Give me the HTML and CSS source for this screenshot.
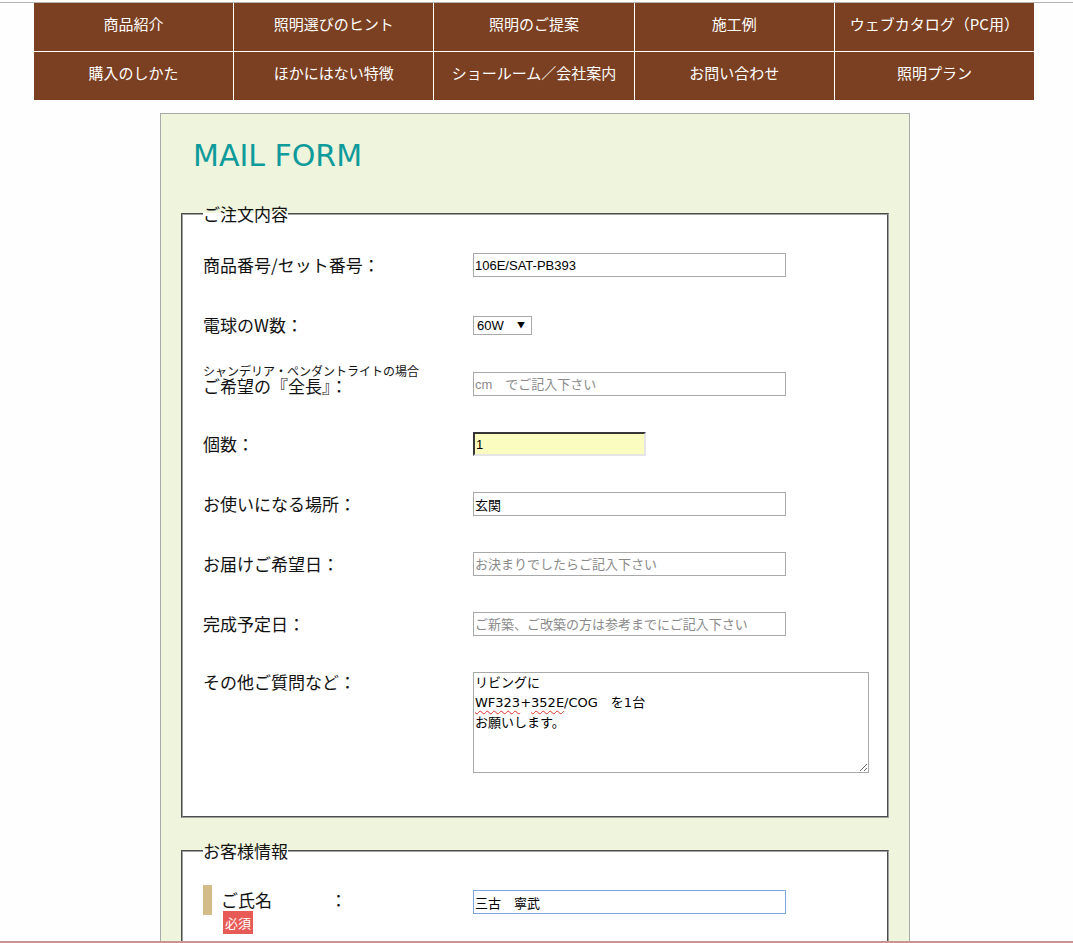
FILE: index.html
```html
<!DOCTYPE html>
<html lang="ja">
<head>
<meta charset="utf-8">
<title>MAIL FORM</title>
<link rel="stylesheet" href="styles.css">
</head>
<body>
<div class="topline"></div>
<div class="page">
  <nav class="gnav">
    <a href="#">商品紹介</a>
    <a href="#">照明選びのヒント</a>
    <a href="#">照明のご提案</a>
    <a href="#">施工例</a>
    <a href="#">ウェブカタログ（PC用）</a>
    <a href="#">購入のしかた</a>
    <a href="#">ほかにはない特徴</a>
    <a href="#">ショールーム／会社案内</a>
    <a href="#">お問い合わせ</a>
    <a href="#">照明プラン</a>
  </nav>

  <div class="formbox">
    <h1 class="title">MAIL FORM</h1>
    <form class="mailform">
      <fieldset class="fs">
        <legend>ご注文内容</legend>
        <div class="row">
          <label class="lbl">商品番号/セット番号：</label>
          <input class="txt" type="text" value="106E/SAT-PB393">
        </div>
        <div class="row row-sel">
          <label class="lbl">電球のW数：</label>
          <span class="selwrap"><select class="sel"><option>60W</option><option>40W</option><option>100W</option></select></span>
        </div>
        <div class="row">
          <label class="lbl lbl2"><span class="sub">シャンデリア・ペンダントライトの場合</span><span class="main">ご希望の『全長』：</span></label>
          <input class="txt" type="text" placeholder="cm　でご記入下さい">
        </div>
        <div class="row">
          <label class="lbl">個数：</label>
          <input class="txt qty" type="text" value="1">
        </div>
        <div class="row">
          <label class="lbl">お使いになる場所：</label>
          <input class="txt" type="text" value="玄関">
        </div>
        <div class="row">
          <label class="lbl">お届けご希望日：</label>
          <input class="txt" type="text" placeholder="お決まりでしたらご記入下さい">
        </div>
        <div class="row">
          <label class="lbl">完成予定日：</label>
          <input class="txt" type="text" placeholder="ご新築、ご改築の方は参考までにご記入下さい">
        </div>
        <div class="row row-top">
          <label class="lbl">その他ご質問など：</label>
          <div class="area" role="textbox" aria-multiline="true">リビングに<br><span class="sp">WF323</span>+<span class="sp">352E</span>/COG　を1台<br>お願いします。</div>
        </div>
      </fieldset>

      <fieldset class="fs fs2">
        <legend>お客様情報</legend>
        <div class="row row-req">
          <div class="reqlbl">
            <label class="reqname"><span class="nm">ご氏名</span>：</label>
            <span class="badge">必須</span>
          </div>
          <input class="txt focus" type="text" value="三古　寧武">
        </div>
      </fieldset>
    </form>
  </div>
</div>
<div class="bottombar"></div>
</body>
</html>
```

FILE: styles.css
```css
html, body {
  margin: 0;
  padding: 0;
  background: #fefefe;
}

body {
  font-family: "Noto Sans CJK JP", "Liberation Sans", sans-serif;
  color: #111;
}

.topline {
  height: 2px;
  border-bottom: 1px solid #b4b4b4;
}

.page {
  width: 1000px;
  margin-left: 34px;
}

/* navigation */
.gnav {
  display: grid;
  grid-template-columns: repeat(5, 1fr);
  grid-auto-rows: 48px;
  gap: 1px;
  background: #ffffff;
}

.gnav a {
  display: flex;
  align-items: center;
  justify-content: center;
  padding-bottom: 8px;
  box-sizing: border-box;
  background: #7b3f22;
  color: #ffffff;
  text-decoration: none;
  font-size: 15px;
  letter-spacing: 0;
}

/* form box */
.formbox {
  width: 750px;
  box-sizing: border-box;
  margin: 13px 0 0 126px;
  border: 1px solid #a9a9a9;
  background: #eff4dc;
  padding: 0 20px 40px;
}

.title {
  margin: 24px 0 0 12px;
  font-family: "DejaVu Sans", Verdana, sans-serif;
  font-weight: normal;
  font-size: 30px;
  line-height: 35px;
  color: #0f9b9b;
}

.mailform {
  margin: 0;
}

.fs {
  margin: 31px 0 0;
  border: 2px groove #a0a0a0;
  background: #ffffff;
  padding: 29px 10px 43px 20px;
  min-width: 0;
}

.fs legend {
  padding: 0;
  font-size: 17px;
  line-height: 20px;
  color: #111;
}

.fs2 {
  margin-top: 23px;
  padding-top: 24px;
  padding-bottom: 40px;
}

.row {
  display: grid;
  grid-template-columns: 270px 1fr;
  align-items: center;
  margin-bottom: 36px;
}

.row-sel {
  margin-bottom: 35px;
}

.row:last-child {
  margin-bottom: 0;
}

.row-top {
  align-items: start;
}

.lbl {
  font-size: 17px;
  line-height: 24px;
  color: #111;
}

.lbl2 {
  height: 24px;
}

.lbl .sub {
  display: block;
  font-size: 12px;
  line-height: 13px;
  margin-top: -8px;
}

.lbl .main {
  display: block;
  line-height: 18px;
}

.row-top .lbl {
  line-height: 20px;
}

.txt {
  width: 313px;
  height: 24px;
  box-sizing: border-box;
  border: 1px solid #a9a9a9;
  padding: 0 1px;
  margin: 0;
  font-family: "Liberation Sans", "Noto Sans CJK JP", sans-serif;
  font-size: 13px;
  color: #000;
  background: #fff;
  outline: none;
}

.txt::placeholder {
  color: #8a8a8a;
  opacity: 1;
}

.qty {
  width: 173px;
  background: #fafcc0;
  border: 2px inset #e3e3e3;
  border-top-color: #8a8a8a;
  border-left-color: #8a8a8a;
  border-right-color: #e6e6e6;
  border-bottom-color: #e6e6e6;
}

.focus {
  border-color: #7ea5de;
}

.selwrap {
  position: relative;
  display: inline-block;
  justify-self: start;
}

.sel {
  appearance: none;
  -webkit-appearance: none;
  width: 59px;
  height: 19px;
  box-sizing: border-box;
  border: 1px solid #a9a9a9;
  border-radius: 0;
  background: #fff;
  padding: 0 0 0 3px;
  margin: 0;
  font-family: "Liberation Sans", sans-serif;
  font-size: 13px;
  line-height: 17px;
  color: #000;
  display: block;
}

.selwrap::after {
  content: "▼";
  position: absolute;
  right: 7px;
  top: 4px;
  font-size: 8px;
  line-height: 10px;
  color: #000;
  pointer-events: none;
}

.area {
  width: 396px;
  height: 101px;
  box-sizing: border-box;
  border: 1px solid #a9a9a9;
  padding: 0 1px;
  font-family: "DejaVu Sans", "Noto Sans CJK JP", sans-serif;
  font-size: 13px;
  line-height: 20px;
  color: #000;
  background: #fff;
  resize: both;
  overflow: auto;
}

.sp {
  text-decoration: underline wavy #e03030;
  text-decoration-thickness: 1px;
  text-underline-offset: 3px;
}

/* required row */
.row-req {
  align-items: start;
}

.row-req .txt {
  margin-top: 5px;
}

.reqlbl {
  display: flex;
  flex-direction: column;
  align-items: flex-start;
}

.reqname {
  border-left: 9px solid #d3bb8a;
  padding-left: 9px;
  font-size: 17px;
  line-height: 30px;
  color: #111;
}

.reqname .nm {
  display: inline-block;
  width: 109px;
}

.badge {
  margin: -4px 0 0 20px;
  width: 30px;
  height: 23px;
  background: #e85a56;
  color: #fff;
  font-size: 13px;
  line-height: 23px;
  text-align: center;
}

.bottombar {
  position: fixed;
  left: 0;
  right: 0;
  bottom: 0;
  height: 2px;
  background: #c9958f;
}
```
